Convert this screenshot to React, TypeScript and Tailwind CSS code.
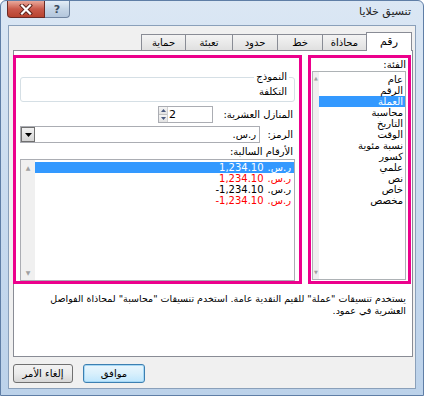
import React from 'react';

const FONT = { fontFamily: '"DejaVu Sans", "Noto Sans", sans-serif' };

const tabs = [
  { label: 'رقم', w: 'w-[46px]', active: true },
  { label: 'محاذاة', w: 'w-[44px]' },
  { label: 'خط', w: 'w-[45px]' },
  { label: 'حدود', w: 'w-[45px]' },
  { label: 'تعبئة', w: 'w-[47px]' },
  { label: 'حماية', w: 'w-[44px]' },
];

const categories = ['عام', 'الرقم', 'العملة', 'محاسبة', 'التاريخ', 'الوقت', 'نسبة مئوية', 'كسور', 'علمي', 'نص', 'خاص', 'مخصص'];

const negatives = [
  { v: '1,234.10', cls: 'bg-[#3399ff] text-white' },
  { v: '1,234.10', cls: 'text-[#ff0000]' },
  { v: '-1,234.10', cls: 'text-black' },
  { v: '-1,234.10', cls: 'text-[#ff0000]' },
];

function TitleBar() {
  return (
    <div className="h-[24px] flex items-start justify-between pl-[6px] pr-[12px]" dir="ltr">
      <div className="flex">
        <div className="w-[38px] h-[17px] rounded-bl-[4px] border border-t-0 border-[#6b2a24] bg-gradient-to-b from-[#e9a99c] via-[#c95a4a] to-[#b8432f] flex items-center justify-center">
          <svg width="14" height="11" viewBox="0 0 14 11">
            <path d="M3 1.5 L11 9.5 M11 1.5 L3 9.5" stroke="#5a1f17" strokeWidth="4" strokeLinecap="square" />
            <path d="M3 1.5 L11 9.5 M11 1.5 L3 9.5" stroke="#ffffff" strokeWidth="2.2" strokeLinecap="square" />
          </svg>
        </div>
        <div className="w-[25px] h-[17px] rounded-br-[4px] border border-t-0 border-l-0 border-[#6f84a0] bg-gradient-to-b from-[#e4edf6] via-[#c5d5e6] to-[#b3c6dc] flex items-center justify-center">
          <span className="text-[11px] leading-none font-bold text-[#3b4b5e]">?</span>
        </div>
      </div>
      <div className="pt-[4px] text-[11px] leading-[14px] text-[#1e1e1e]" dir="rtl">تنسيق خلايا</div>
    </div>
  );
}

function Tabs() {
  return (
    <div className="h-[24px] flex items-end pr-[3px]" dir="rtl">
      {tabs.map((t) => (
        <div
          key={t.label}
          className={
            t.active
              ? `${t.w} h-[19px] -mb-px relative z-10 bg-white border border-b-0 border-[#898c95] flex items-center justify-center text-[11px] text-black`
              : `${t.w} h-[16px] border-t border-l border-[#898c95] bg-gradient-to-b from-[#f4f4f4] to-[#e0e0e0] flex items-center justify-center text-[10px] text-black`
          }
        >
          {t.label}
        </div>
      ))}
    </div>
  );
}

function CategoryPanel() {
  return (
    <div className="w-[103px] mr-[1px] border-[3px] border-[#ec008c] flex flex-col">
      <div className="h-[12px] mt-[1px] pr-[2px] text-[10px] leading-[12px] text-black">الفئة:</div>
      <div className="ml-[1px] mr-[2px] h-[209px] border border-[#adb2b5] bg-white flex" dir="ltr">
        <div className="w-[6px] bg-[#f0f0f0] flex flex-col justify-between items-center py-[3px] text-[5px] text-[#a0a0a0]">
          <span>▲</span>
          <span>▼</span>
        </div>
        <div className="flex-1 pt-[2px]" dir="rtl">
          {categories.map((c) => (
            <div
              key={c}
              className={`h-[11px] leading-[11px] pr-[2px] text-[10px] whitespace-nowrap ${c === 'العملة' ? 'bg-[#3399ff] text-white' : 'text-black'}`}
            >
              {c}
            </div>
          ))}
        </div>
      </div>
    </div>
  );
}

function FormatPanel() {
  return (
    <div className="w-[289px] -ml-px border-[3px] border-[#ec008c] flex flex-col">
      <fieldset className="mt-[13px] mx-[4px] border border-[#d5dfe5] rounded-[3px] px-[5px] pb-[3px]">
        <legend className="px-[2px] text-[10px] leading-[12px] text-black">النموذج</legend>
        <div className="mt-[3px] pr-[2px] text-[10px] leading-[12px] text-black">التكلفة</div>
      </fieldset>

      <div className="mt-[4px] h-[17px] flex items-center pr-[6px]">
        <div className="w-[80px] text-[10px] leading-[12px] text-black whitespace-nowrap">المنازل العشرية:</div>
        <div className="w-[55px] h-[17px] border border-[#abadb3] bg-white flex" dir="ltr">
          <div className="w-[9px] flex flex-col border-r border-[#d0d0d0]">
            <div className="flex-1 flex items-center justify-center bg-gradient-to-b from-[#f5f5f5] to-[#e3e3e3] border-b border-[#c0c0c0]">
              <svg width="5" height="3" viewBox="0 0 5 3"><path d="M0 3 L2.5 0 L5 3 Z" fill="#4a5a80" /></svg>
            </div>
            <div className="flex-1 flex items-center justify-center bg-gradient-to-b from-[#f5f5f5] to-[#e3e3e3]">
              <svg width="5" height="3" viewBox="0 0 5 3"><path d="M0 0 L2.5 3 L5 0 Z" fill="#4a5a80" /></svg>
            </div>
          </div>
          <div className="pl-[1px] text-[11px] leading-[15px] text-black">2</div>
        </div>
      </div>

      <div className="mt-[3px] h-[17px] flex items-center justify-between pr-[6px] pl-[4px]">
        <div className="text-[10px] leading-[12px] text-black">الرمز:</div>
        <div className="w-[240px] h-[17px] border border-[#abadb3] bg-white flex" dir="ltr">
          <div className="w-[14px] h-full border border-[#707070] bg-gradient-to-b from-[#f2f2f2] to-[#d4d4d4] flex items-center justify-center">
            <svg width="7" height="4" viewBox="0 0 7 4"><path d="M0 0 L7 0 L3.5 4 Z" fill="#000" /></svg>
          </div>
          <div className="flex-1 pr-[3px] text-right text-[10px] leading-[15px] text-black" dir="rtl">ر.س.</div>
        </div>
      </div>

      <div className="mt-[3px] h-[12px] pr-[6px] text-[10px] leading-[12px] text-black">الأرقام السالبة:</div>

      <div className="mt-[1px] mx-[4px] h-[122px] border border-[#abadb3] bg-white flex" dir="ltr">
        <div className="w-[14px] bg-[#f0f0f0] flex flex-col justify-between items-center py-[3px] text-[6px] text-[#a0a0a0]">
          <span>▲</span>
          <span>▼</span>
        </div>
        <div className="flex-1 pt-[2px]" dir="rtl">
          {negatives.map((n, i) => (
            <div key={i} className={`h-[11px] flex items-center gap-[4px] pr-[3px] text-[10px] leading-[11px] whitespace-nowrap ${n.cls}`}>
              <span>ر.س.</span>
              <span dir="ltr">{n.v}</span>
            </div>
          ))}
        </div>
      </div>
    </div>
  );
}

export default function App() {
  return (
    <div className="w-[424px] h-[396px] overflow-hidden" style={FONT}>
      <div className="w-[424px] h-[396px] flex flex-col rounded-t-[6px] border border-[#5f7ea6] bg-gradient-to-b from-[#dbe7f4] via-[#c9dbef] to-[#bcd2ea]">
        <TitleBar />
        <div className="mx-[7px] h-[364px] border border-[#8aa0ba] bg-[#f0f0f0] flex flex-col">
          <Tabs />
          <div className="ml-[4px] mr-[2px] h-[307px] border border-[#898c95] bg-white flex flex-col" dir="rtl">
            <div className="mt-[4px] flex gap-[6px]">
              <CategoryPanel />
              <FormatPanel />
            </div>
            <p className="mt-[9px] pr-[6px] pl-[2px] text-[9.5px] leading-[12px] text-black">
              يستخدم تنسيقات "عملة" للقيم النقدية عامة. استخدم تنسيقات "محاسبة" لمحاذاة الفواصل العشرية في عمود.
            </p>
          </div>
          <div className="mt-[7px] pl-[4px] flex gap-[10px]" dir="ltr">
            <button className="w-[60px] h-[19px] rounded-[3px] border border-[#707070] bg-gradient-to-b from-[#f2f2f2] via-[#ebebeb] to-[#d6d6d6] text-[10px] text-black">
              إلغاء الأمر
            </button>
            <button className="w-[62px] h-[19px] rounded-[3px] border border-[#3c7fb1] bg-gradient-to-b from-[#eaf6fd] via-[#d9f0fc] to-[#bee6fd] shadow-[inset_0_0_0_1px_#a6d8f5] text-[10px] text-black">
              موافق
            </button>
          </div>
        </div>
      </div>
    </div>
  );
}
